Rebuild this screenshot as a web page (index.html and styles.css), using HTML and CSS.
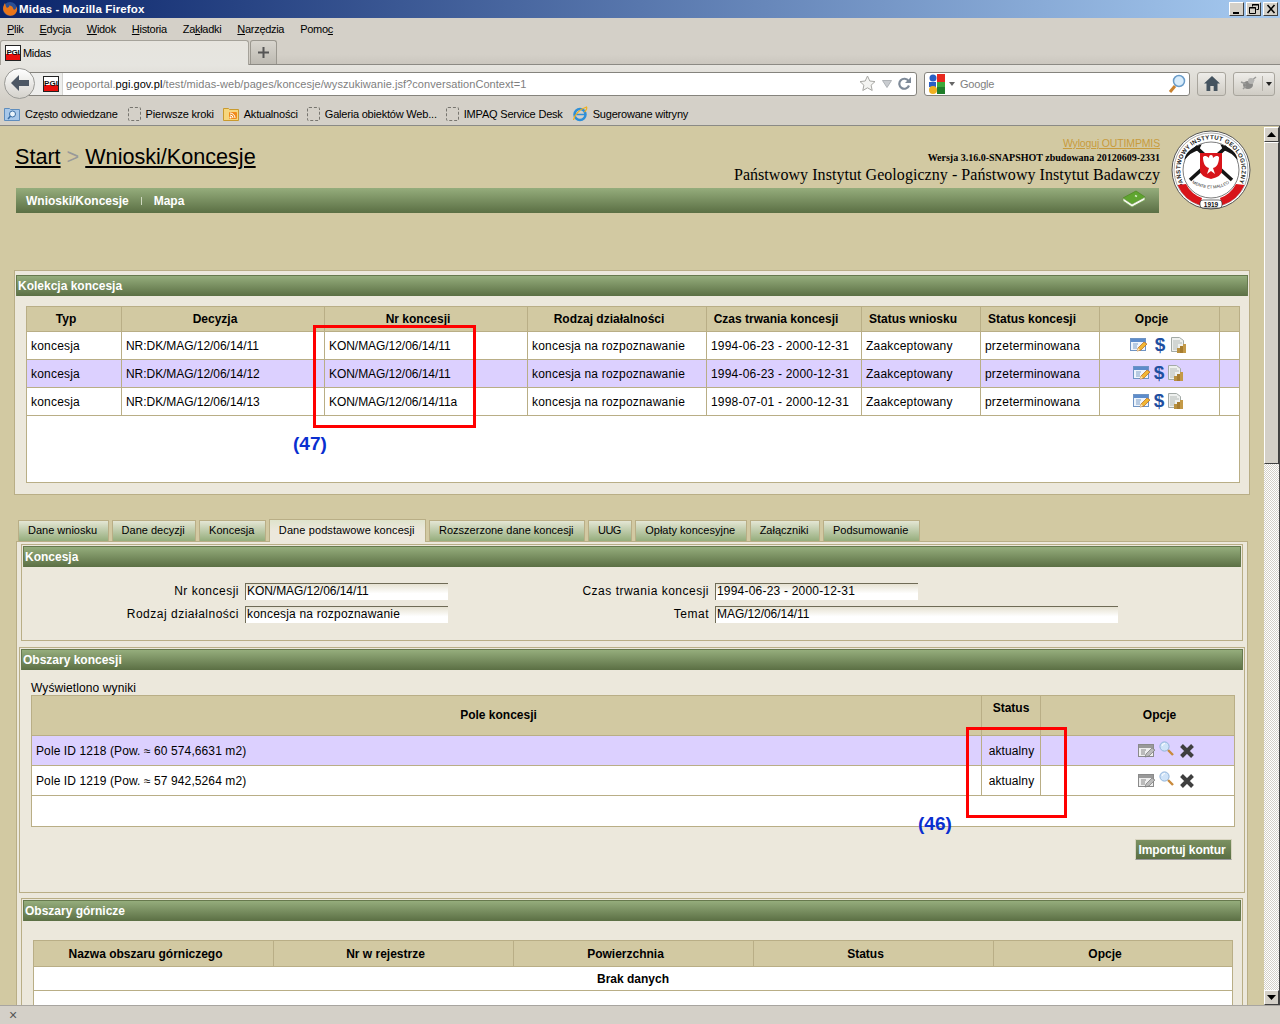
FILE: index.html
```html
<!DOCTYPE html>
<html lang="pl">
<head>
    <meta charset="UTF-8">
    <meta name="viewport" content="width=device-width, initial-scale=1.0">
    <title>Midas - Mozilla Firefox</title>
    <link rel="stylesheet" href="styles.css">
</head>
<body>
    <svg class="icon-defs" width="0" height="0">
        <defs>
            <symbol id="i-pgi" viewBox="0 0 16 16">
                <rect width="16" height="16" fill="#fff"/>
                <rect y="9" width="16" height="7" fill="#e8100c"/>
                <rect x=".5" y=".5" width="15" height="15" fill="none" stroke="#222"/>
                <text x="8" y="10" text-anchor="middle" font-family="Liberation Sans" font-size="8" font-weight="bold" fill="#111">PGI</text>
            </symbol>
            <symbol id="i-form" viewBox="0 0 17 16">
                <rect x=".5" y="1.500" width="15" height="12" fill="#eef4fb" stroke="#6f94c4"/>
                <rect x="1" y="2" width="14" height="3" fill="#5d8ccb"/>
                <path d="M3 7h5M3 9h4M3 11h4" stroke="#7fa0c8"/>
                <path d="M7 14l1-3 6-6 3 2-6 6z" fill="#f2b632" stroke="#b5651d" stroke-width=".7"/>
                <path d="M7 14l1-3 2 2z" fill="#fbe7c0"/>
            </symbol>
            <symbol id="i-form-grey" viewBox="0 0 17 16">
                <rect x=".5" y="1.500" width="15" height="12" fill="#eee" stroke="#8a8a8a"/>
                <rect x="1" y="2" width="14" height="3" fill="#999"/>
                <path d="M3 7h5M3 9h4M3 11h4" stroke="#888"/>
                <path d="M7 14l1-3 6-6 3 2-6 6z" fill="#bbb" stroke="#777" stroke-width=".7"/>
            </symbol>
            <symbol id="i-report" viewBox="0 0 15 16">
                <path d="M.5.500h8l4 3v11h-12z" fill="#eef0ee" stroke="#a3aaa6"/>
                <path d="M2 4h7M2 6h9M2 8h5M2 10h5M2 12h4" stroke="#b4bab6"/>
                <rect x="6" y="11" width="3" height="5" fill="#b8903f"/>
                <rect x="9" y="9" width="3" height="7" fill="#a67c30"/>
                <rect x="12" y="7" width="3" height="9" fill="#c49a48"/>
            </symbol>
            <symbol id="i-search" viewBox="0 0 15 15">
                <path d="M9 9l5 5" stroke="#c98a3c" stroke-width="2.400"/>
                <circle cx="5.500" cy="5.500" r="4.600" fill="#cfe3f8" stroke="#8fb3d9"/>
                <path d="M3 5a3 3 0 0 1 3-2.500" stroke="#fff" fill="none"/>
            </symbol>
            <symbol id="i-close" viewBox="0 0 16 16">
                <path d="M2.500 2.500l11 11M13.500 2.500l-11 11" stroke="#3f3f3f" stroke-width="4"/>
            </symbol>
        </defs>
    </svg>

    <div class="titlebar">
        <svg class="ff-logo" width="16" height="16" viewBox="0 0 16 16">
            <circle cx="8" cy="8" r="7" fill="#2c4f93"/>
            <path d="M3 2c-2 3-3 7 0 10 3 3.500 8 3.500 10.500 .5 2-2.500 2-5 1-7-.5 3-2 3.500-3 3-.5-2.500-2-4-4.500-4 1 1-1 2-2 2.500C4 6 3.500 4 3 2z" fill="#e8751a"/>
        </svg>
        <span class="title-text">Midas - Mozilla Firefox</span>
        <div class="win-btns">
            <span class="win-btn"><svg width="12" height="12" viewBox="0 0 12 12"><rect x="2" y="9" width="6" height="2" fill="#000"/></svg></span>
            <span class="win-btn"><svg width="12" height="12" viewBox="0 0 12 12"><path d="M4.500 3.500V1.500h6v5h-2M1.500 4.500h6v6h-6z" fill="none" stroke="#000"/><path d="M4 2h7M1 5h7" stroke="#000"/></svg></span>
            <span class="win-btn win-close"><svg width="12" height="12" viewBox="0 0 12 12"><path d="M2.500 2l7 8M9.500 2l-7 8" stroke="#000" stroke-width="1.600"/></svg></span>
        </div>
    </div>

    <div class="menubar">
        <span><u>P</u>lik</span>
        <span><u>E</u>dycja</span>
        <span><u>W</u>idok</span>
        <span><u>H</u>istoria</span>
        <span>Za<u>k</u>ładki</span>
        <span><u>N</u>arzędzia</span>
        <span>Pomo<u>c</u></span>
    </div>

    <div class="tabstrip">
        <div class="browser-tab">
            <svg width="16" height="16"><use href="#i-pgi"/></svg>
            <span>Midas</span>
        </div>
        <div class="new-tab">
            <svg width="11" height="11" viewBox="0 0 11 11"><path d="M5.500 0v11M0 5.500h11" stroke="#555" stroke-width="2"/></svg>
        </div>
    </div>

    <div class="navbar">
        <div class="url-wrap">
            <div class="back-btn">
                <svg width="20" height="18" viewBox="0 0 20 18"><path d="M1 9l8-8v5h10v6H9v5z" fill="#4d5764"/></svg>
            </div>
            <div class="urlbar">
                <div class="url-site"><svg width="16" height="16"><use href="#i-pgi"/></svg></div>
                <div class="url-text">geoportal.<b>pgi.gov.pl</b>/test/midas-web/pages/koncesje/wyszukiwanie.jsf?conversationContext=1</div>
                <svg class="url-star" width="17" height="17" viewBox="0 0 17 17"><path d="M8.500 1l2.300 5 5.200.6-3.900 3.600 1.100 5.300-4.700-2.700-4.700 2.700 1.100-5.300L1 6.600 6.200 6z" fill="#f4f4f2" stroke="#a8a8a4"/></svg>
                <svg class="url-drop" width="10" height="8" viewBox="0 0 10 8"><path d="M.5.500h9L5 7.500z" fill="#c9ccd0" stroke="#aeb2b6"/></svg>
                <svg class="url-reload" width="13" height="13" viewBox="0 0 13 13"><path d="M10.500 4A5 5 0 1 0 11 8.500" fill="none" stroke="#7f8b99" stroke-width="2.200"/><path d="M13 0v6H7z" fill="#7f8b99"/></svg>
            </div>
        </div>
        <div class="searchbar">
            <svg width="16" height="20" viewBox="0 0 16 20">
                <rect x="8" y="0" width="8" height="8" fill="#e8281e"/>
                <rect x="8" y="8" width="8" height="5" fill="#3da83a"/>
                <rect x="8" y="13" width="8" height="7" fill="#1f7d2a"/>
                <circle cx="4" cy="4" r="3.500" fill="#2a5fc4"/>
                <rect x="0" y="8" width="7" height="5" fill="#2a5fc4"/>
                <circle cx="4" cy="16" r="4" fill="#efb020"/>
            </svg>
            <svg class="search-drop" width="6" height="4" viewBox="0 0 6 4"><path d="M0 0h6L3 4z" fill="#666"/></svg>
            <span class="search-text">Google</span>
            <svg class="search-go" width="18" height="20" viewBox="0 0 18 20">
                <path d="M7 12l-5 6" stroke="#c9822f" stroke-width="3"/>
                <circle cx="11" cy="7" r="5.500" fill="#d8ecfb" stroke="#6a9cc9" stroke-width="1.500"/>
            </svg>
        </div>
        <div class="tool-btn home-btn">
            <svg width="16" height="15" viewBox="0 0 16 15"><path d="M8 0l8 7.500h-2.500V15H9.700v-5H6.300v5H2.500V7.500H0z" fill="#44535f"/></svg>
        </div>
        <div class="tool-btn addon-btn">
            <span class="addon-main">
                <svg width="17" height="15" viewBox="0 0 17 15"><ellipse cx="8" cy="9" rx="5" ry="4" fill="#8a8a88"/><path d="M1 6l5 2M16 1l-6 5M14 4l-3 3M3 13l3-3" stroke="#9a9a98" stroke-width="1.500"/><circle cx="11" cy="5" r="3" fill="#b5b5b3"/></svg>
            </span>
            <span class="addon-arrow"><svg width="6" height="4" viewBox="0 0 6 4"><path d="M0 0h6L3 4z" fill="#222"/></svg></span>
        </div>
    </div>

    <div class="bookmarks">
        <span class="bm">
            <svg width="16" height="16" viewBox="0 0 16 16"><path d="M.5 2.500h5l1 1h9v11H.5z" fill="#a8c8ea" stroke="#5f8dbd"/><circle cx="8.500" cy="8" r="3" fill="#eaf4fc" stroke="#3a6ea5"/><path d="M6.500 10L4 13" stroke="#3a6ea5" stroke-width="1.500"/></svg>
            Często odwiedzane
        </span>
        <span class="bm"><span class="bm-empty"></span>Pierwsze kroki</span>
        <span class="bm">
            <svg width="16" height="16" viewBox="0 0 16 16"><path d="M.5 2.500h5l1 1h9v11H.5z" fill="#f6d67e" stroke="#c99a2e"/><rect x="6" y="6" width="8" height="7" rx="1" fill="#f08a1c"/><circle cx="7.500" cy="11.500" r="1" fill="#fff"/><path d="M7 9a3 3 0 0 1 3 3M7 7a5 5 0 0 1 5 5" stroke="#fff" fill="none"/></svg>
            Aktualności
        </span>
        <span class="bm"><span class="bm-empty"></span>Galeria obiektów Web...</span>
        <span class="bm"><span class="bm-empty"></span>IMPAQ Service Desk</span>
        <span class="bm">
            <svg width="16" height="16" viewBox="0 0 16 16"><circle cx="8" cy="8.500" r="5.500" fill="none" stroke="#2d8fd8" stroke-width="2.500"/><path d="M3 8.500h10" stroke="#2d8fd8" stroke-width="1.500"/><path d="M1.500 14C2 9 8 3 14.500 1c1 2-1 4-2 5" fill="none" stroke="#efb020" stroke-width="1.300"/></svg>
            Sugerowane witryny
        </span>
    </div>

    <div class="viewport">
        <div class="page">
            <div class="page-head">
                <div class="head-main">
                    <div class="head-top">
                        <div class="breadcrumb"><a>Start</a> <span class="crumb-sep">&gt;</span> <a>Wnioski/Koncesje</a></div>
                        <div class="head-info">
                            <a class="logout">Wyloguj OUTIMPMIS</a>
                            <div class="version">Wersja 3.16.0-SNAPSHOT zbudowana 20120609-2331</div>
                            <div class="institute">Państwowy Instytut Geologiczny - Państwowy Instytut Badawczy</div>
                        </div>
                    </div>
                    <div class="mainnav">
                        <a>Wnioski/Koncesje</a>
                        <span class="nav-sep"></span>
                        <a>Mapa</a>
                        <svg class="nav-book" width="24" height="18" viewBox="0 0 24 18">
                            <path d="M1 8l13-7 9 6-13 7z" fill="#5fa52f" stroke="#4f8a22" stroke-width=".8"/>
                            <path d="M1 8v3l9 6 13-7V7l-13 7z" fill="#f5f6ee" stroke="#6c9a48" stroke-width=".8"/>
                            <path d="M13 5.500l2 1" stroke="#d8ecc4" stroke-width="1.500"/>
                        </svg>
                    </div>
                </div>
                <svg class="seal" width="80" height="80" viewBox="0 0 80 80">
                    <defs>
                        <path id="seal-arc" d="M13.800 56A30.700 30.700 0 1 1 66.200 56"/>
                        <path id="seal-motto" d="M21 53Q40 64 59 53"/>
                    </defs>
                    <circle cx="40" cy="40" r="39" fill="#fff" stroke="#555" stroke-width="1"/>
                    <circle cx="40" cy="40" r="37" fill="none" stroke="#777" stroke-width=".6"/>
                    <circle cx="40" cy="40" r="28" fill="#fff" stroke="#444" stroke-width=".7"/>
                    <text font-family="Liberation Sans" font-size="6" font-weight="bold" fill="#222" letter-spacing=".3"><textPath href="#seal-arc">PAŃSTWOWY INSTYTUT GEOLOGICZNY</textPath></text>
                    <path d="M6.500 55A37 37 0 0 0 29 75.300L31 68A28.500 28.500 0 0 1 15 54z" fill="#d8141a"/>
                    <path d="M73.500 55A37 37 0 0 1 51 75.300L49 68A28.500 28.500 0 0 0 65 54z" fill="#d8141a"/>
                    <path d="M19 50L55.700 16.700M61 50L24.300 16.700" stroke="#151515" stroke-width="3.600"/>
                    <path d="M13.300 30Q15 19 30.700 14.300L28 20Q20 22 13.300 30zM66.700 30Q65 19 49.300 14.300L52 20Q60 22 66.700 30z" fill="#151515"/>
                    <path d="M29 23h22v18q0 5-11 8-11-3-11-8z" fill="#d8141a"/>
                    <path d="M40 25c-1.500 0-2 1-2 3-3-3-5-2-6-1 0 6 2 10 6 11l-2 6 4-3 4 3-2-6c4-1 6-5 6-11-1-1-3-2-6 1 0-2-.5-3-2-3z" fill="#fff"/>
                    <text font-family="Liberation Sans" font-size="4.200" fill="#222"><textPath href="#seal-motto">MENTE ET MALLEO</textPath></text>
                    <rect x="29" y="70" width="22" height="8" rx="3" fill="#fff" stroke="#333" stroke-width=".7"/>
                    <text x="40" y="76.500" text-anchor="middle" font-family="Liberation Sans" font-size="6.500" font-weight="bold" fill="#111">1919</text>
                </svg>
            </div>

            <div class="panel panel-collection">
                <div class="panel-title">Kolekcja koncesja</div>
                <table class="grid grid-collection">
                    <colgroup>
                        <col class="c-typ"><col class="c-dec"><col class="c-nr"><col class="c-rodz"><col class="c-czas"><col class="c-stw"><col class="c-stk"><col class="c-opc"><col>
                    </colgroup>
                    <thead>
                        <tr><th>Typ</th><th>Decyzja</th><th>Nr koncesji</th><th>Rodzaj działalności</th><th>Czas trwania koncesji</th><th>Status wniosku</th><th>Status koncesji</th><th>Opcje</th><th></th></tr>
                    </thead>
                    <tbody>
                        <tr>
                            <td>koncesja</td><td class="code">NR:DK/MAG/12/06/14/11</td><td class="code">KON/MAG/12/06/14/11</td><td>koncesja na rozpoznawanie</td><td>1994-06-23 - 2000-12-31</td><td>Zaakceptowany</td><td>przeterminowana</td>
                            <td class="opts opts-wide"><svg width="17" height="16"><use href="#i-form"/></svg><span class="dollar">$</span><svg width="15" height="16"><use href="#i-report"/></svg></td><td></td>
                        </tr>
                        <tr class="selected">
                            <td>koncesja</td><td class="code">NR:DK/MAG/12/06/14/12</td><td class="code">KON/MAG/12/06/14/11</td><td>koncesja na rozpoznawanie</td><td>1994-06-23 - 2000-12-31</td><td>Zaakceptowany</td><td>przeterminowana</td>
                            <td class="opts"><svg width="17" height="16"><use href="#i-form"/></svg><span class="dollar">$</span><svg width="15" height="16"><use href="#i-report"/></svg></td><td></td>
                        </tr>
                        <tr>
                            <td>koncesja</td><td class="code">NR:DK/MAG/12/06/14/13</td><td class="code">KON/MAG/12/06/14/11a</td><td>koncesja na rozpoznawanie</td><td>1998-07-01 - 2000-12-31</td><td>Zaakceptowany</td><td>przeterminowana</td>
                            <td class="opts"><svg width="17" height="16"><use href="#i-form"/></svg><span class="dollar">$</span><svg width="15" height="16"><use href="#i-report"/></svg></td><td></td>
                        </tr>
                        <tr class="filler filler-collection"><td colspan="9"></td></tr>
                    </tbody>
                </table>
            </div>

            <div class="tabs">
                <a class="tab">Dane wniosku</a>
                <a class="tab">Dane decyzji</a>
                <a class="tab">Koncesja</a>
                <a class="tab active">Dane podstawowe koncesji</a>
                <a class="tab">Rozszerzone dane koncesji</a>
                <a class="tab tab-short">UUG</a>
                <a class="tab">Opłaty koncesyjne</a>
                <a class="tab">Załączniki</a>
                <a class="tab">Podsumowanie</a>
            </div>

            <div class="tab-body">
                <div class="panel panel-form">
                    <div class="panel-title">Koncesja</div>
                    <div class="form-grid">
                        <label>Nr koncesji</label><div class="field code">KON/MAG/12/06/14/11</div>
                        <label>Czas trwania koncesji</label><div class="field">1994-06-23 - 2000-12-31</div>
                        <label>Rodzaj działalności</label><div class="field">koncesja na rozpoznawanie</div>
                        <label>Temat</label><div class="field field-long code">MAG/12/06/14/11</div>
                    </div>
                </div>

                <div class="panel panel-areas">
                    <div class="panel-title">Obszary koncesji</div>
                    <div class="result-note">Wyświetlono wyniki</div>
                    <table class="grid grid-areas">
                        <colgroup><col><col class="c-status"><col class="c-opts"></colgroup>
                        <thead>
                            <tr><th class="th-pole">Pole koncesji</th><th class="th-status">Status</th><th class="th-opts">Opcje</th></tr>
                        </thead>
                        <tbody>
                            <tr class="selected">
                                <td>Pole ID 1218 (Pow. ≈ 60 574,6631 m2)</td><td class="td-status">aktualny</td>
                                <td class="opts opts-area"><svg width="17" height="16"><use href="#i-form-grey"/></svg><svg class="ic-search" width="15" height="15"><use href="#i-search"/></svg><svg width="16" height="16"><use href="#i-close"/></svg></td>
                            </tr>
                            <tr>
                                <td>Pole ID 1219 (Pow. ≈ 57 942,5264 m2)</td><td class="td-status">aktualny</td>
                                <td class="opts opts-area"><svg width="17" height="16"><use href="#i-form-grey"/></svg><svg class="ic-search" width="15" height="15"><use href="#i-search"/></svg><svg width="16" height="16"><use href="#i-close"/></svg></td>
                            </tr>
                            <tr class="filler filler-areas"><td colspan="3"></td></tr>
                        </tbody>
                    </table>
                    <div class="panel-actions"><button class="btn-green">Importuj kontur</button></div>
                </div>

                <div class="panel panel-mining">
                    <div class="panel-title">Obszary górnicze</div>
                    <table class="grid grid-mining">
                        <thead>
                            <tr><th>Nazwa obszaru górniczego</th><th>Nr w rejestrze</th><th>Powierzchnia</th><th>Status</th><th>Opcje</th></tr>
                        </thead>
                        <tbody>
                            <tr class="empty-row"><td colspan="5">Brak danych</td></tr>
                            <tr class="filler filler-mining"><td colspan="5"></td></tr>
                        </tbody>
                    </table>
                </div>
            </div>

            <div class="mark mark-collection"></div>
            <div class="mark-label label-47">(47)</div>
            <div class="mark mark-status"></div>
            <div class="mark-label label-46">(46)</div>
        </div>

        <div class="scrollbar">
            <div class="sb-btn"><svg width="9" height="5" viewBox="0 0 9 5"><path d="M4.500 0L9 5H0z" fill="#000"/></svg></div>
            <div class="sb-thumb"></div>
            <div class="sb-track"></div>
            <div class="sb-btn"><svg width="9" height="5" viewBox="0 0 9 5"><path d="M0 0h9L4.500 5z" fill="#000"/></svg></div>
        </div>
    </div>

    <div class="statusbar">×</div>
</body>
</html>
```

FILE: styles.css
```css
:root {
    --chrome: #d4d0c8;
    --sand: #d2c9a2;
    --line: #b9ae86;
    --cream: #ece8dc;
    --select: #dcd0ff;
}

* {
    margin: 0;
    padding: 0;
    box-sizing: border-box;
}

html, body {
    height: 1024px;
    overflow: hidden;
}

body {
    display: flex;
    flex-direction: column;
    width: 1280px;
    font-family: "Liberation Sans", Arial, sans-serif;
    font-size: 12px;
    color: #000;
    background-color: var(--chrome);
}

svg {
    display: block;
    flex: none;
}

.icon-defs {
    position: absolute;
}

/* browser window */
.titlebar {
    display: flex;
    align-items: center;
    height: 18px;
    flex: none;
    padding: 0 2px;
    background: linear-gradient(to right, #0a246a, #a6caf0);
    color: #fff;
    font-size: 11.500px;
    font-weight: bold;
    letter-spacing: .12px;
}

.title-text {
    margin-left: 1px;
}

.win-btns {
    display: flex;
    gap: 2px;
    margin-left: auto;
}

.win-btn {
    display: flex;
    align-items: center;
    justify-content: center;
    width: 15px;
    height: 14px;
    background-color: var(--chrome);
    border: 1px solid;
    border-color: #fff #404040 #404040 #fff;
}

.menubar {
    display: flex;
    align-items: center;
    gap: 16px;
    flex: none;
    height: 22px;
    padding-left: 7px;
    font-size: 11px;
    letter-spacing: -.3px;
    background-color: var(--chrome);
}

.tabstrip {
    display: flex;
    flex: none;
    align-items: flex-end;
    gap: 1px;
    height: 25px;
    background: linear-gradient(to bottom, var(--chrome) 60%, #cbc7bf);
    border-bottom: 1px solid #8c8a84;
}

.browser-tab {
    display: flex;
    align-items: center;
    gap: 2px;
    width: 249px;
    height: 25px;
    margin-bottom: -1px;
    padding: 0 4px;
    font-size: 11px;
    letter-spacing: -.3px;
    background: linear-gradient(to bottom, #e6e4de, #e6e5e0);
    border: 1px solid #a5a29a;
    border-bottom: none;
    border-radius: 3px 3px 0 0;
}

.new-tab {
    display: flex;
    align-items: center;
    justify-content: center;
    width: 27px;
    height: 24px;
    background: linear-gradient(to bottom, #d8d5ce, #bdbab2);
    border: 1px solid #9a978f;
    border-bottom: none;
    border-radius: 3px 3px 0 0;
}

.navbar {
    display: flex;
    align-items: center;
    flex: none;
    height: 35px;
    background: linear-gradient(to bottom, #e6e5e0, var(--chrome));
    padding-top: 2px;
}

.url-wrap {
    position: relative;
    display: flex;
    align-items: center;
    width: 917px;
    padding-left: 19px;
}

.back-btn {
    position: absolute;
    left: 4px;
    top: -4px;
    z-index: 2;
    display: flex;
    align-items: center;
    justify-content: center;
    width: 31px;
    height: 31px;
    border-radius: 50%;
    background: linear-gradient(to bottom, #fff, #d4d2cc);
    border: 1px solid #9a9a96;
}

.urlbar {
    display: flex;
    align-items: center;
    flex: 1;
    height: 24px;
    background-color: #fff;
    border: 1px solid #85837d;
    border-radius: 3px;
}

.url-site {
    display: flex;
    align-items: center;
    justify-content: flex-end;
    width: 43px;
    height: 22px;
    padding-right: 3px;
    border-right: 1px solid #d5d5d2;
    background-color: #eeeeec;
}

.url-text {
    flex: 1;
    padding-left: 3px;
    font-size: 11px;
    letter-spacing: .06px;
    color: #7e7e7e;
}

.url-text b {
    font-weight: normal;
    color: #000;
}

.url-star {
    margin-right: 6px;
}

.url-drop {
    margin-right: 6px;
}

.url-reload {
    margin-right: 5px;
}

.searchbar {
    display: flex;
    align-items: center;
    width: 266px;
    height: 24px;
    margin-left: 7px;
    padding: 0 3px 0 4px;
    background-color: #fff;
    border: 1px solid #85837d;
    border-radius: 3px;
}

.search-drop {
    margin-left: 4px;
}

.search-text {
    margin-left: 5px;
    font-size: 11px;
    letter-spacing: -.2px;
    color: #7e7e7e;
}

.search-go {
    margin-left: auto;
}

.tool-btn {
    display: flex;
    align-items: center;
    height: 24px;
    background: linear-gradient(to bottom, #eeede9, #cfccc4);
    border: 1px solid #a8a59d;
    border-radius: 3px;
}

.home-btn {
    justify-content: center;
    width: 29px;
    margin-left: 7px;
}

.addon-btn {
    width: 42px;
    margin-left: 7px;
}

.addon-main {
    display: flex;
    justify-content: center;
    width: 29px;
    border-right: 1px solid #b5b2aa;
}

.addon-arrow {
    display: flex;
    justify-content: center;
    flex: 1;
}

.bookmarks {
    display: flex;
    align-items: center;
    flex: none;
    gap: 9px;
    height: 25px;
    padding: 3px 0 0 4px;
    font-size: 11px;
    letter-spacing: -.2px;
    background-color: var(--chrome);
}

.bm {
    display: flex;
    align-items: center;
    gap: 5px;
}

.bm:first-child {
    margin-right: 1px;
}

.bm-empty {
    width: 13px;
    height: 14px;
    border: 1px dashed #77756f;
    border-radius: 2px;
}

/* page */
.viewport {
    display: flex;
    flex: none;
    height: 880px;
    border-top: 1px solid #8a8a86;
    background-color: var(--sand);
}

.page {
    position: relative;
    flex: none;
    width: 1264px;
    height: 879px;
    overflow: hidden;
}

.page-head {
    display: flex;
    padding-left: 15px;
}

.head-main {
    width: 1145px;
}

.head-top {
    display: flex;
    justify-content: space-between;
    height: 61px;
}

.breadcrumb {
    padding-top: 18px;
    font-size: 21.600px;
    color: #999;
}

.breadcrumb a {
    color: #000;
    text-decoration: underline;
}

.head-info {
    padding-top: 10px;
    text-align: right;
    font-family: "Liberation Serif", "Times New Roman", serif;
}

.logout {
    display: block;
    font-family: "Liberation Sans", Arial, sans-serif;
    font-size: 10.500px;
    letter-spacing: -.15px;
    line-height: 14px;
    color: #c89b3c;
    text-decoration: underline;
}

.version {
    font-size: 10px;
    font-weight: bold;
    line-height: 15px;
}

.institute {
    font-size: 16px;
    letter-spacing: .05px;
    line-height: 20px;
}

.mainnav {
    display: flex;
    align-items: center;
    height: 27px;
    padding: 0 13px 0 10px;
    background: linear-gradient(to bottom, #95ad7c, #5b6f44);
    border: 1px solid var(--sand);
    color: #fff;
    font-weight: bold;
}

.nav-sep {
    width: 1px;
    height: 8px;
    margin: 0 12px;
    background-color: #cfd8c0;
}

.nav-book {
    margin: -4px 0 0 auto;
}

.seal {
    margin: 4px 0 0 11px;
}

.panel {
    background-color: var(--cream);
    border: 1px solid var(--line);
}

.panel-title {
    height: 21px;
    padding-left: 1px;
    line-height: 20px;
    color: #fff;
    font-weight: bold;
    background: linear-gradient(to bottom, #95ad7c, #5b6f44);
    border: 1px solid #66794d;
    border-width: 1px 1px 0;
}

.panel-collection {
    width: 1236px;
    height: 225px;
    margin: 56px 0 0 14px;
    padding: 4px 1px 0;
}

.grid {
    border-collapse: collapse;
    table-layout: fixed;
    background-color: #fff;
}

.grid th, .grid td {
    border: 1px solid var(--line);
    letter-spacing: .1px;
    padding: 0 4px;
    white-space: nowrap;
}

.grid .code {
    letter-spacing: -.05px;
}

.grid th {
    background-color: var(--sand);
    font-weight: bold;
    text-align: center;
    letter-spacing: 0;
}

.grid .selected td {
    background-color: var(--select);
}

.grid-collection {
    width: 1214px;
    margin: 10px 0 0 10px;
}

.grid-collection th, .grid-mining th {
    padding-right: 20px;
}

.grid-collection thead tr {
    height: 25px;
}

.grid-collection tbody tr {
    height: 28px;
}

.grid-collection td {
    letter-spacing: .2px;
}

.grid-collection .filler-collection {
    height: 67px;
}

.c-typ { width: 95px; }
.c-dec { width: 203px; }
.c-nr { width: 203px; }
.c-rodz { width: 179px; }
.c-czas { width: 155px; }
.c-stw { width: 119px; }
.c-stk { width: 119px; }
.c-opc { width: 120px; }

.grid .opts {
    padding: 0;
}

.opts {
    white-space: nowrap;
}

.grid td.opts svg, .dollar {
    display: inline-block;
    vertical-align: middle;
}

.grid-collection .opts {
    text-align: center;
    font-size: 0;
}

.grid-collection td.opts {
    padding: 0 3px 2px 0;
}

.dollar {
    width: 12px;
    margin: 0 3px;
    font-size: 19px;
    font-weight: bold;
    line-height: 16px;
    letter-spacing: 0;
    color: #1f4fa0;
    text-align: center;
}

.opts-wide .dollar {
    margin: 0 5px 0 7px;
}

/* tabs */
.tabs {
    display: flex;
    align-items: flex-end;
    gap: 3px;
    height: 23px;
    margin: 24px 0 0 18px;
    position: relative;
    z-index: 1;
}

.tab {
    height: 21px;
    padding: 0 10.500px 0 9px;
    margin-bottom: 1px;
    line-height: 19px;
    font-size: 11px;
    background: linear-gradient(to bottom, #e4e6d4, #95ad7c);
    border: 1px solid var(--line);
    border-bottom: none;
}

.tab-short {
    letter-spacing: -.6px;
}

.tab.active {
    height: 23px;
    margin-bottom: 0;
    line-height: 20px;
    letter-spacing: .1px;
    background: linear-gradient(to bottom, #dfe3cc, var(--cream) 50%);
}

.tab-body {
    width: 1232px;
    height: 500px;
    margin: -1px 0 0 16px;
    padding: 2px 2px 0;
    background-color: var(--cream);
    border: 1px solid var(--line);
}

.panel-form {
    width: 1222px;
    height: 97px;
    margin-left: 2px;
    padding: 1px;
}

.form-grid {
    display: grid;
    grid-template-columns: 216px 203px 255px 203px;
    grid-auto-rows: 17px;
    gap: 6px;
    margin-top: 16px;
    letter-spacing: .2px;
}

.form-grid label {
    text-align: right;
    line-height: 17px;
    letter-spacing: .5px;
}

.field {
    padding-left: 1px;
    line-height: 15px;
    background: linear-gradient(to bottom, #e6e2d2, #fff 60%);
    border-top: 1px solid #6f6b56;
    border-left: 1px solid #6f6b56;
    white-space: nowrap;
}

.field.code {
    letter-spacing: -.05px;
}

.field-long {
    width: 403px;
}

.panel-areas {
    width: 1226px;
    height: 246px;
    margin-top: 6px;
    padding: 1px;
}

.result-note {
    margin: 11px 0 0 10px;
    height: 14px;
    line-height: 14px;
    letter-spacing: .1px;
}

.grid-areas {
    width: 1204px;
    margin: 0 0 0 10px;
}

.c-status { width: 59px; }
.c-opts { width: 194px; }

.grid-areas thead tr {
    height: 40px;
}

.grid-areas tbody tr {
    height: 30px;
}

.grid-areas .filler-areas {
    height: 31px;
}

.grid .th-pole {
    padding: 0 20px 2px 4px;
}

.grid .th-status {
    vertical-align: top;
    padding-top: 5px;
}

.grid .td-status {
    text-align: center;
    padding-left: 5px;
}

.grid .th-opts {
    padding: 0 4px 2px 48px;
}

.grid-areas .opts-area {
    font-size: 0;
    padding-left: 97px;
}

.opts-area svg {
    margin-right: 4px;
}

.opts-area .ic-search {
    margin: -5px 5px 0 0;
}

.panel-actions {
    display: flex;
    justify-content: flex-end;
    padding: 12px 11px 0 0;
}

.btn-green {
    height: 21px;
    width: 97px;
    padding-right: 3px;
    font-family: inherit;
    font-size: 12px;
    font-weight: bold;
    letter-spacing: -.1px;
    color: #fff;
    background: linear-gradient(to bottom, #7b9161, #5b6f44);
    border: 1px solid;
    border-color: #d8d4c0 #d8d4c0 #999 #d8d4c0;
}

.panel-mining {
    width: 1222px;
    height: 200px;
    margin: 5px 0 0 2px;
    padding: 1px;
}

.grid-mining {
    width: 1200px;
    margin: 19px 0 0 10px;
}

.grid-mining th:not(:last-child) {
    width: 240px;
}

.grid-mining thead tr {
    height: 26px;
}

.empty-row {
    height: 24px;
}

.grid .empty-row td {
    text-align: center;
    font-weight: bold;
    letter-spacing: 0;
}

.filler-mining {
    height: 60px;
}

/* annotations laid over the page */
.mark {
    position: absolute;
    border: 3px solid #f00;
}

.mark-collection {
    left: 313px;
    top: 199px;
    width: 163px;
    height: 103px;
}

.mark-status {
    left: 966px;
    top: 601px;
    width: 101px;
    height: 91px;
}

.mark-label {
    position: absolute;
    font-size: 19px;
    font-weight: bold;
    line-height: 24px;
    color: #0a2fd0;
}

.label-47 {
    left: 293px;
    top: 306px;
}

.label-46 {
    left: 918px;
    top: 686px;
}

/* scrollbar */
.scrollbar {
    display: flex;
    flex-direction: column;
    flex: none;
    width: 16px;
    padding-top: 1px;
    border-right: 1px solid #444;
}

.sb-btn {
    display: flex;
    align-items: center;
    justify-content: center;
    flex: none;
    height: 15px;
    background-color: var(--chrome);
    border: 1px solid;
    border-color: #fff #404040 #404040 #fff;
}

.sb-thumb {
    flex: none;
    height: 322px;
    background-color: var(--chrome);
    border: 1px solid;
    border-color: #fff #404040 #404040 #fff;
}

.sb-track {
    flex: 1;
    background: repeating-conic-gradient(#fff 0 25%, var(--chrome) 0 50%) 0 0 / 2px 2px;
}

.statusbar {
    flex: none;
    height: 19px;
    padding-left: 9px;
    font-size: 14px;
    line-height: 18px;
    color: #555;
    background-color: var(--chrome);
    border-top: 1px solid #a8a5a0;
}
```
